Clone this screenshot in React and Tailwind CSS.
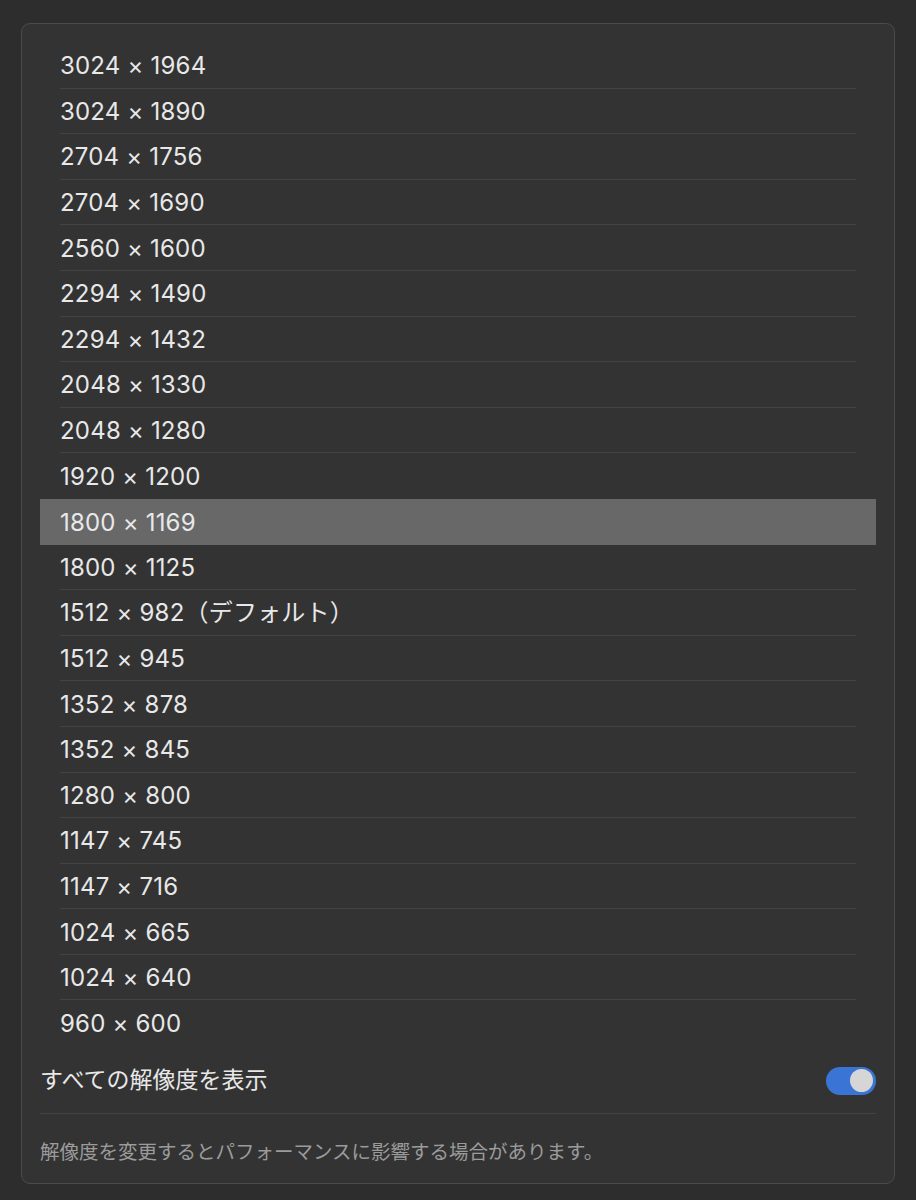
import React, { useState } from 'react';

const resolutions = [
  '3024 × 1964',
  '3024 × 1890',
  '2704 × 1756',
  '2704 × 1690',
  '2560 × 1600',
  '2294 × 1490',
  '2294 × 1432',
  '2048 × 1330',
  '2048 × 1280',
  '1920 × 1200',
  '1800 × 1169',
  '1800 × 1125',
  '1512 × 982（デフォルト）',
  '1512 × 945',
  '1352 × 878',
  '1352 × 845',
  '1280 × 800',
  '1147 × 745',
  '1147 × 716',
  '1024 × 665',
  '1024 × 640',
  '960 × 600',
];

const App = () => {
  const [selected, setSelected] = useState(10);
  const [showAll, setShowAll] = useState(true);

  return (
    <div
      className="min-h-[1200px] w-[916px] bg-[#2d2d2d] px-[21px] pt-[23px] pb-[16px]"
      style={{ fontFamily: 'Inter, "Noto Sans CJK JP", sans-serif' }}
    >
      <div className="rounded-[9px] border border-[#4b4b4b] bg-[#333333] px-[18px] pt-[19px]">
        <ul>
          {resolutions.map((res, index) => {
            const isSelected = index === selected;
            const nextSelected = index + 1 === selected;
            const isLast = index === resolutions.length - 1;
            return (
              <li
                key={res}
                onClick={() => setSelected(index)}
                className={`h-[45.6px] px-[20px] ${isSelected ? 'bg-[#686868]' : ''}`}
              >
                <div
                  className={`flex h-full items-center pt-[2px] text-[24px] tracking-[0.2px] text-[#e8e8e8] ${
                    isSelected || nextSelected || isLast ? '' : 'border-b border-[#434343]'
                  }`}
                >
                  {res}
                </div>
              </li>
            );
          })}
        </ul>
        <div className="flex h-[68px] items-center justify-between border-b border-[#434343] pt-[2px]">
          <span className="text-[23px] text-[#e8e8e8]">すべての解像度を表示</span>
          <button
            type="button"
            onClick={() => setShowAll(!showAll)}
            className={`flex h-[28px] w-[50px] items-center rounded-full p-[3px] ${
              showAll ? 'justify-end bg-[#3a75d6]' : 'justify-start bg-[#5a5a5a]'
            }`}
          >
            <span className="h-[23px] w-[23px] rounded-full bg-[#d6d6d6]" />
          </button>
        </div>
        <p className="pt-[24px] pb-[16px] text-[19.5px] text-[#9b9b9b]">
          解像度を変更するとパフォーマンスに影響する場合があります。
        </p>
      </div>
    </div>
  );
};

export default App;
